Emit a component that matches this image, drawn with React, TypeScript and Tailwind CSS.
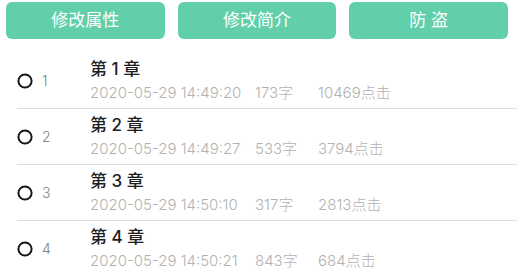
import { useState } from "react";

interface Chapter {
  id: number;
  time: string;
  words: number;
  clicks: number;
}

const chapters: Chapter[] = [
  { id: 1, time: "2020-05-29 14:49:20", words: 173, clicks: 10469 },
  { id: 2, time: "2020-05-29 14:49:27", words: 533, clicks: 3794 },
  { id: 3, time: "2020-05-29 14:50:10", words: 317, clicks: 2813 },
  { id: 4, time: "2020-05-29 14:50:21", words: 843, clicks: 684 },
];

const actions = ["修改属性", "修改简介", "防 盗"];

function Radio({ checked }: { checked: boolean }) {
  return (
    <svg width="16" height="16" viewBox="0 0 16 16" className="shrink-0">
      <circle cx="8" cy="8" r="6.6" fill="none" stroke="#161616" strokeWidth="2" />
      {checked && <circle cx="8" cy="8" r="3.5" fill="#161616" />}
    </svg>
  );
}

export default function App() {
  const [selected, setSelected] = useState<number | null>(null);

  return (
    <div className="h-[272px] w-[517px] overflow-hidden bg-white font-['Inter','Noto_Sans_CJK_SC',sans-serif]">
      <div className="grid grid-cols-3 gap-[13px] pl-[6px] pr-[9px] pt-[2px]">
        {actions.map((a) => (
          <button
            key={a}
            type="button"
            className="flex h-[37px] items-center justify-center rounded-[6px] bg-[#61cfa9] text-[17px] text-white"
          >
            {a}
          </button>
        ))}
      </div>

      <ul className="mt-[14px]">
        {chapters.map((c) => (
          <li
            key={c.id}
            className="ml-[17px] flex h-[56px] items-center border-b border-[#dedede]"
            onClick={() => setSelected(c.id)}
          >
            <Radio checked={selected === c.id} />
            <span className="ml-[9px] w-[48px] text-[14px] font-light text-[#808080]">{c.id}</span>
            <div className="flex flex-col">
              <span className="text-[17px] font-medium leading-[20px] text-[#1e1e1e]">
                第 {c.id} 章
              </span>
              <div className="mt-[4px] flex text-[15px] font-light leading-[20px] text-[#b2b2b2]">
                <span className="w-[165px]">{c.time}</span>
                <span className="w-[63px]">{c.words}字</span>
                <span>{c.clicks}点击</span>
              </div>
            </div>
          </li>
        ))}
      </ul>
    </div>
  );
}
